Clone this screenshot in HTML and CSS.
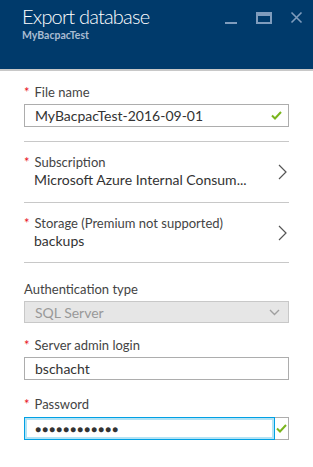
FILE: index.html
```html
<!DOCTYPE html>
<html lang="en">
<head>
  <meta charset="UTF-8">
  <title>Export database</title>
  <link rel="stylesheet" href="styles.css">
</head>
<body>

<div class="blade">
  <!-- Blade header -->
  <div class="header">
    <div class="titles">
      <h1>Export database</h1>
      <div class="subtitle">MyBacpacTest</div>
    </div>
    <div class="controls">
      <svg width="14" height="14" viewBox="0 0 14 14"><rect x="1" y="11" width="12" height="2" fill="#7f9cbd"/></svg>
      <svg width="16" height="14" viewBox="0 0 16 14"><rect x="1" y="2" width="14" height="10" fill="none" stroke="#7f9cbd" stroke-width="2"/><rect x="1" y="2" width="14" height="3" fill="#7f9cbd"/></svg>
      <svg width="13" height="13" viewBox="0 0 13 13"><path d="M1.5 1.5 L11.5 11.5 M11.5 1.5 L1.5 11.5" stroke="#7f9cbd" stroke-width="1.6"/></svg>
    </div>
  </div>

  <!-- Form -->
  <div class="form">
    <div class="field">
      <label><span class="req">*</span>File name</label>
      <div class="input">
        <span>MyBacpacTest-2016-09-01</span>
        <svg class="check" width="11" height="9" viewBox="0 0 11 9"><path d="M1 4.5 L4 7.5 L10 1" fill="none" stroke="#7ab51d" stroke-width="2"/></svg>
      </div>
    </div>

    <div class="picker">
      <div>
        <label><span class="req">*</span>Subscription</label>
        <div class="value">Microsoft Azure Internal Consum...</div>
      </div>
      <svg width="9" height="16" viewBox="0 0 9 16"><path d="M1 1 L8 8 L1 15" fill="none" stroke="#555" stroke-width="1.2"/></svg>
    </div>

    <div class="picker">
      <div>
        <label><span class="req">*</span>Storage (Premium not supported)</label>
        <div class="value">backups</div>
      </div>
      <svg width="9" height="16" viewBox="0 0 9 16"><path d="M1 1 L8 8 L1 15" fill="none" stroke="#555" stroke-width="1.2"/></svg>
    </div>

    <div class="field auth">
      <label>Authentication type</label>
      <div class="select">
        <span>SQL Server</span>
        <svg width="11" height="7" viewBox="0 0 11 7"><path d="M1 1 L5.5 5.5 L10 1" fill="none" stroke="#a0a0a0" stroke-width="1.4"/></svg>
      </div>
    </div>

    <div class="field login">
      <label><span class="req">*</span>Server admin login</label>
      <div class="input"><span>bschacht</span></div>
    </div>

    <div class="field">
      <label><span class="req">*</span>Password</label>
      <div class="password">
        <div class="pw-box">&#9679;&#9679;&#9679;&#9679;&#9679;&#9679;&#9679;&#9679;&#9679;&#9679;&#9679;&#9679;</div>
        <div class="pw-check">
          <svg width="11" height="9" viewBox="0 0 11 9"><path d="M1 4.5 L4 7.5 L10 1" fill="none" stroke="#7ab51d" stroke-width="2"/></svg>
        </div>
      </div>
    </div>
  </div>
</div>

</body>
</html>
```

FILE: styles.css
```css
* {
  box-sizing: border-box;
}
body {
  margin: 0;
  background: #fff;
  font-family: Lato, "Noto Sans", sans-serif;
  color: #333;
}
.blade {
  width: 313px;
}
.header {
  height: 71px;
  background: #003a6b;
  border-bottom: 2px solid #c8c8c8;
  display: flex;
  justify-content: space-between;
  padding: 3px 10px 0 22px;
}
.header h1 {
  margin: 0;
  font-size: 20px;
  font-weight: 300;
  letter-spacing: -0.8px;
  color: #fff;
  line-height: 26px;
}
.subtitle {
  font-size: 10.5px;
  font-weight: 700;
  color: #a9bcd2;
  line-height: 13px;
}
.controls {
  display: flex;
  gap: 18px;
  padding-top: 8px;
}
.form {
  padding: 13px 24px 0;
}
label {
  display: block;
  font-size: 13px;
  line-height: 16px;
  color: #444;
}
.req {
  color: #e81123;
  margin-right: 5px;
}
.field {
  margin-bottom: 14px;
}
.login {
  margin-top: 1px;
  margin-bottom: 16px;
}
.input {
  height: 23px;
  border: 1px solid #adadad;
  margin-top: 4px;
  display: flex;
  align-items: center;
  justify-content: space-between;
  padding: 0 6px 0 10px;
  font-size: 14px;
  color: #333;
}
.picker {
  border-top: 1px solid #c8c8c8;
  display: flex;
  align-items: center;
  justify-content: space-between;
  padding: 12px 0 12px;
  height: 61px;
}
.picker:nth-child(3) {
  border-bottom: 1px solid #c8c8c8;
}
.picker svg {
  margin-right: 2px;
}
.value {
  font-size: 14px;
  line-height: 20px;
  color: #333;
  padding-left: 10px;
}
.auth {
  margin-top: 18px;
}
.select {
  height: 22px;
  margin-top: 4px;
  background: #e6e6e6;
  border: 1px solid #c8c8c8;
  display: flex;
  align-items: center;
  justify-content: space-between;
  padding: 0 8px 0 10px;
  font-size: 14px;
  color: #999;
}
.password {
  display: flex;
  margin-top: 5px;
  height: 23px;
}
.pw-box {
  flex: 1;
  border: 1px solid #00a0e4;
  box-shadow: inset 0 0 0 2px #b3e3f5;
  display: flex;
  align-items: center;
  padding-left: 10px;
  font-size: 10px;
  letter-spacing: 1px;
  color: #333;
}
.pw-check {
  width: 14px;
  border: 1px solid #adadad;
  border-left: none;
  display: flex;
  align-items: center;
  justify-content: center;
}
```
